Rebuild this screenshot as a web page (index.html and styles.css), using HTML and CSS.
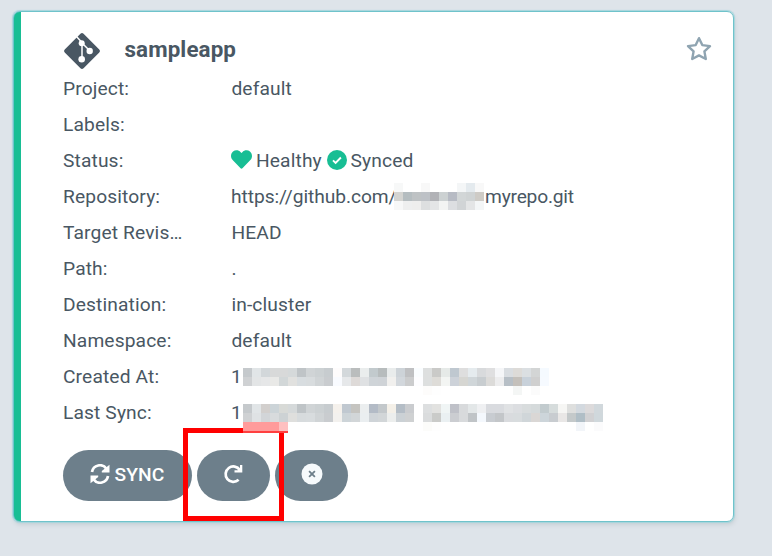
FILE: index.html
```html
<!DOCTYPE html>
<html lang="en">
<head>
<meta charset="utf-8">
<title>Applications</title>
<link rel="stylesheet" href="styles.css">
</head>
<body>
<article class="card">
  <header class="head">
    <svg class="git" viewBox="0 0 38 38"><rect x="5.700" y="5.700" width="26.600" height="26.600" rx="2.200" transform="rotate(45 19 19)" fill="#495763"/><g stroke="#fff" stroke-width="1.500" fill="none"><path d="M13.500 4.500l5.500 6v16M19 11l8 8"/></g><g fill="#fff"><circle cx="18.700" cy="11.300" r="3"/><circle cx="26.700" cy="19" r="3.200"/><circle cx="18.700" cy="27.300" r="3.300"/></g></svg>
    <h1 class="title">sampleapp</h1>
    <svg class="star" viewBox="0 0 26 26"><path d="M13 2.200l3.300 6.900 7.700 1-5.600 5.300 1.400 7.600L13 19.400 6.200 23l1.400-7.600L2 10.100l7.700-1z" fill="none" stroke="#8fa4b1" stroke-width="2.400" stroke-linejoin="round"/></svg>
  </header>
  <dl class="info">
    <dt>Project:</dt><dd>default</dd>
    <dt>Labels:</dt><dd></dd>
    <dt>Status:</dt>
    <dd class="status">
      <svg class="heart" viewBox="0 0 512 512"><path fill="#18be94" d="M462.300 62.600C407.500 15.900 326 24.300 275.700 76.200L256 96.500l-19.700-20.300C186.100 24.300 104.500 15.900 49.700 62.600c-62.800 53.600-66.100 149.800-9.900 207.900l193.500 199.800c12.500 12.900 32.800 12.900 45.300 0l193.500-199.800c56.300-58.100 53-154.300-9.800-207.900z"/></svg>
      <span class="healthy">Healthy</span>
      <svg class="check" viewBox="0 0 20 20"><circle cx="10" cy="10" r="10" fill="#18be94"/><path d="M6 10.300l2.600 2.600 5.300-5.400" fill="none" stroke="#fff" stroke-width="1.900"/></svg>
      <span>Synced</span>
    </dd>
    <dt>Repository:</dt><dd class="repo"><span class="host">https://github.com/</span><span class="mosaic" data-mosaic="owner"></span><span class="name">myrepo.git</span></dd>
    <dt>Target Revis…</dt><dd>HEAD</dd>
    <dt>Path:</dt><dd>.</dd>
    <dt>Destination:</dt><dd>in-cluster</dd>
    <dt>Namespace:</dt><dd>default</dd>
    <dt>Created At:</dt><dd class="date"><span class="digit">1</span><span class="mosaic" data-mosaic="created"></span></dd>
    <dt>Last Sync:</dt><dd class="date"><span class="digit">1</span><span class="mosaic" data-mosaic="synced"></span></dd>
  </dl>
  <div class="actions">
    <button class="btn sync"><svg class="ic" viewBox="0 0 20 20"><g fill="none" stroke="#fff" stroke-width="2.700"><path d="M2 8A8 8 0 0 1 16.500 4.800M18 12A8 8 0 0 1 3.500 15.200"/></g><path fill="#fff" d="M19.500.8v7.700h-7.700V7zM.5 19.200v-7.700h7.700V13z"/></svg><span>SYNC</span></button>
    <button class="btn refresh"><svg class="ic" viewBox="0 0 20 20"><path d="M16.800 6A7.700 7.700 0 1 0 15.600 15.800" fill="none" stroke="#fff" stroke-width="2.700"/><path d="M19.300 1V8.500h-7.800V6.200h3.200L17 3.800V1z" fill="#fff"/></svg></button>
    <button class="btn"><svg class="ic x" viewBox="0 0 22 22"><circle cx="11" cy="11" r="10.500" fill="#f6fafc"/><path d="M8.100 8.100l5.800 5.800M13.900 8.100l-5.800 5.800" stroke="#6d7f8b" stroke-width="1.800"/></svg></button>
  </div>
</article>
<div class="highlight"></div>
<div class="smudge"></div>
<script src="mosaic.js"></script>
</body>
</html>
```
FILE: styles.css
```css
* { box-sizing: border-box; }
body {
  margin: 0;
  padding: 11px 0 0 13px;
  height: 556px;
  overflow: hidden;
  background: #dee4ea;
  font-family: Roboto, sans-serif;
  font-size: 19.2px;
  color: #495763;
}
.card {
  width: 721px;
  height: 511px;
  padding: 18px 20px 0 42px;
  background: linear-gradient(90deg, #18be94 7px, #fff 7px);
  border: 1px solid #6fc3cb;
  border-radius: 7px;
  box-shadow: 0 0 1px 1px #a5d5dc, 1px 3px 4px #c8d0d6;
}
.head { display: flex; align-items: center; height: 40px; padding-left: 7px; }
.git { width: 38px; height: 38px; margin: 2px 0 0; }
.title { margin: 0 0 3px 23.5px; font-size: 22.4px; font-weight: 700; line-height: 30px; letter-spacing: .1px; }
.star { width: 26px; height: 26px; margin: 0 1px 3px auto; }
.info {
  display: grid;
  grid-template-columns: 168px 1fr;
  grid-auto-rows: 36px;
  margin: 0;
  padding-left: 7px;
  line-height: 37px;
  letter-spacing: .13px;
}
.info dd { margin: 0; white-space: nowrap; padding-left: .4px; }
.status, .repo, .date { display: flex; align-items: center; }
.info .status, .info .repo, .info .date { padding-left: 0; }
.heart { width: 21px; height: 21px; margin: 0 4px 1px 0; }
.healthy { width: 70.5px; }
.check { width: 20px; height: 20px; margin: 0 4px 1px 0; }
.host { width: 163px; letter-spacing: -.06px; }
.name { margin-left: 1px; letter-spacing: -.2px; }
.digit { width: 12px; }
.mosaic { display: grid; grid-auto-rows: 9px; flex: none; position: relative; }
.repo .mosaic { width: 90px; align-self: flex-start; margin-top: 5px; }
.date .mosaic { align-self: flex-start; margin-top: 10px; }
.actions { display: flex; gap: 5px; padding: 20px 0 0 7px; }
.btn {
  display: flex;
  align-items: center;
  justify-content: center;
  width: 73px;
  height: 51px;
  padding: 0 0 3px;
  border: 0;
  border-radius: 26px;
  background: #6d7f8b;
  color: #fff;
  font: 500 19.2px Roboto, sans-serif;
}
.sync { width: 129px; gap: 4px; letter-spacing: .15px; }
.refresh { padding-right: 1px; }
.ic { width: 20px; height: 20px; }
.x { width: 22px; height: 22px; }
.highlight {
  position: absolute;
  left: 183px;
  top: 428px;
  width: 101px;
  height: 93px;
  border: 5px solid #f00;
}
.smudge {
  position: absolute;
  left: 243px;
  top: 422px;
  width: 45px;
  height: 11px;
  background: linear-gradient(90deg, #ff9b9b 36px, #ffc0c0 36px);
  border-bottom: 2px solid #ff4040;
}
```
FILE: mosaic.js
```js
const cells = {
  owner: [
    'f7f8f8 ffffff ffffff f8f8f8 ffffff ffffff ffffff f4f6f7 e4eaee f8f8f8',
    'd4d4d1 b5bdc0 bec2c4 bdc1c6 b1b2b6 ccd1d2 b7bbc4 d2d6d7 cfd3d4 cecbc6',
    'f7f8f8 eeefef eeeeed dddfe0 e4e5e6 f3f4f3 dcdee1 d1d4d6 e4e5e6 f4f6f7'
  ],
  created: [
    'c5c9cc e1e5e7 d2d7da d8d9d9 d8d9d9 d5d9da bfc4c7 d0d4d6 ccd1d3 c7cccf fefcfc d3d8db babdbd eaeded c2cacd b7bcbd e9ecec cdd3d8 bfc0c2 fafdff dddfdf cacac8 e6eae8 bfc8d0 dedede e5ebee d8dadc dfdfe0 f5f6f8 d9dde1 dddbd8 dbdfe2 d3d5d5 f5faff',
    'cfd1d3 e3e5e6 e6e7e8 e9e9e7 d2d7d8 e1e1df d8dde0 d8dcde d0d4d6 c9cccf f9fbff e6e8ea dedad8 dfe1e3 cfd4d8 cfd3d7 f1f0ee d2d7dc cbcccd fdfdff dddfdf dedcd8 f3f5f3 cdd2d9 d6d6d2 d0d6d9 c8cdd0 dcdbd9 ededee b7bfc6 c4c0bb c8d1da cfcfcf f6faff',
    'ffffff ffffff ffffff ffffff ffffff ffffff ffffff ffffff ffffff ffffff ffffff ffffff ffffff ffffff ffffff ffffff ffffff ffffff ffffff ffffff fdfcfb fefefe ffffff ffffff ffffff ffffff ffffff ffffff ffffff ffffff f4f6f5 ffffff fbfbfb ffffff'
  ],
  synced: [
    'c5c9cc e1e5e7 d2cfcd ccd4d8 d8dad7 d5d9da bfc4c7 d0d4d6 ccd1d3 c7cccf f5f1ec c0c8d0 c5c4c0 ebeeef b3bbc6 c3c8cb f4f0e8 b4bdc6 cacccf ffffff dddfe0 e2e2e0 f0f5f5 bfc1c8 d8dadc e3e7e8 eff0f2 d9dbdf d9dbdf e0e2e4 dcdee1 d8dcdd d5dadb c2cbce d6dcdc f6f6f4 dedfde d3d9df dcdadb d1d8dc',
    'cfd1d3 dfe2e4 d2d5d8 d8dbdd cdd2d4 dfdfdd d7dbdd d8dcde d0d4d6 c9cccf f3f1ee cdd4d8 d2d6d8 eaeef0 cfd4d8 d2d6d8 eceeed cbd1d5 cfd1d2 ffffff dadcdd cacbc9 eaf0f2 cbcdd1 d8dadc c0c4c7 f4f8fd c8ccd1 c3c6c9 d9dbde d8dcde d0d6d9 dad7d5 cdd5da c8ccd0 e9e7e6 c4c9ca b0bec6 d1d1d3 d0d8dc',
    'ffffff ffffff ffffff ffffff ffffff ffffff ffffff ffffff ffffff ffffff ffffff ffffff ffffff ffffff ffffff ffffff ffffff ffffff ffffff ffffff fcfcfa fefefe ffffff ffffff ffffff ffffff ffffff ffffff ffffff ffffff ffffff ffffff ffffff ffffff ffffff ffffff ffffff f2f5f9 ffffff fbfbfc'
  ]
};

document.querySelectorAll('[data-mosaic]').forEach((box) => {
  const rows = cells[box.dataset.mosaic].map((row) => row.split(' '));
  box.style.gridTemplateColumns = `repeat(${rows[0].length}, 9px)`;
  rows.flat().forEach((color) => {
    const cell = document.createElement('i');
    cell.style.background = `#${color}`;
    box.append(cell);
  });
});
```
